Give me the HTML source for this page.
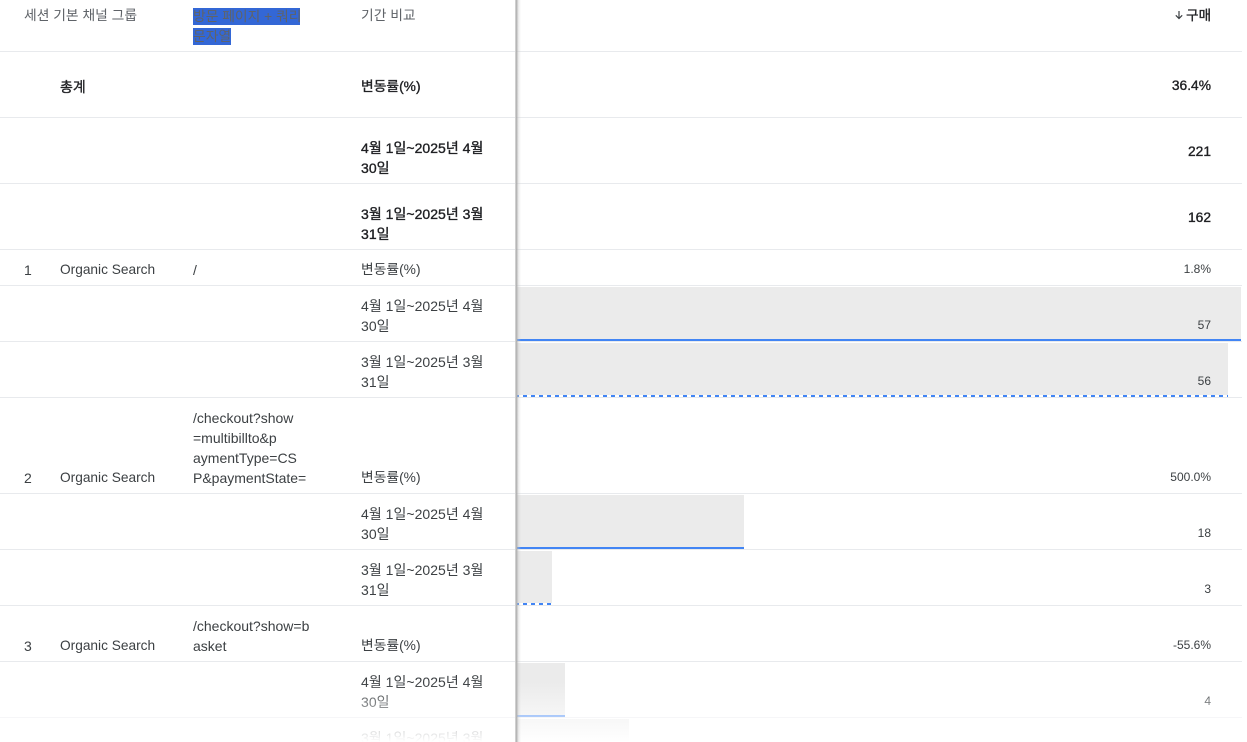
<!DOCTYPE html>
<html lang="ko"><head><meta charset="utf-8"><title>표</title>
<style>
html,body{margin:0;padding:0;background:#fff;width:1247px;height:742px;overflow:hidden}
body{position:relative;font-family:"Liberation Sans","Noto Sans CJK KR",sans-serif;font-size:14px;line-height:20px;color:#3c4043}
.t{position:absolute;white-space:nowrap}
.k{font-size:14px;letter-spacing:.03px}
.p{font-size:13.8px}
.o{font-size:13.7px}
.h{color:#5f6368;font-size:13.8px}
.b{color:#202124;-webkit-text-stroke:.35px #202124}
.n{position:absolute;right:36px;font-size:12px;line-height:20px;white-space:nowrap;color:#3c4043}
.nb{position:absolute;right:36px;font-size:13.8px;line-height:20px;color:#202124;-webkit-text-stroke:.35px #202124;white-space:nowrap}
.l{position:absolute;left:0;width:1242px;height:1px;background:#e8eaed}
.g{position:absolute;left:517px;background:#ebebeb}
.s{position:absolute;left:517px;height:2px;background:#4285f4}
.d{position:absolute;left:517px;height:2px;background:repeating-linear-gradient(90deg,#4285f4 0 2px,#fff 2px 6px,#4285f4 6px 8px)}
.sel{background:#3367d6;position:absolute;height:17px}
</style></head><body>
<div class="g" style="top:287px;width:724px;height:52px"></div>
<div class="s" style="top:339px;width:724px"></div>
<div class="g" style="top:343px;width:711px;height:52px"></div>
<div class="d" style="top:395px;width:711px"></div>
<div class="g" style="top:495px;width:227px;height:52px"></div>
<div class="s" style="top:547px;width:227px"></div>
<div class="g" style="top:551px;width:35px;height:52px"></div>
<div class="d" style="top:603px;width:35px"></div>
<div class="g" style="top:663px;width:48px;height:52px"></div>
<div class="s" style="top:715px;width:48px"></div>
<div class="g" style="top:719px;width:112px;height:23px"></div>

<div class="l" style="top:51px"></div><div class="l" style="top:117px"></div><div class="l" style="top:183px"></div><div class="l" style="top:249px"></div><div class="l" style="top:285px"></div><div class="l" style="top:341px"></div><div class="l" style="top:397px"></div><div class="l" style="top:493px"></div><div class="l" style="top:549px"></div><div class="l" style="top:605px"></div><div class="l" style="top:661px"></div><div class="l" style="top:717px"></div>

<div class="sel" style="left:193px;top:8px;width:107px"></div>
<div class="sel" style="left:193px;top:28px;width:38px"></div>
<div class="t h" style="left:24px;top:6px">세션 기본 채널 그룹</div>
<div class="t h" style="left:193px;top:7px">방문 페이지 + 쿼리</div>
<div class="t h" style="left:193px;top:27px">문자열</div>
<div class="t h" style="left:361px;top:6px">기간 비교</div>

<div class="t b k" style="left:60px;top:77px">총계</div>
<div class="t b p" style="left:361px;top:77px">변동률(%)</div>
<div class="t b k" style="left:361px;top:138px">4월 1일~2025년 4월<br>30일</div>
<div class="t b k" style="left:361px;top:204px">3월 1일~2025년 3월<br>31일</div>

<div class="t" style="left:24px;top:260px">1</div>
<div class="t o" style="left:60px;top:260px">Organic Search</div>
<div class="t" style="left:193px;top:260px">/</div>
<div class="t p" style="left:361px;top:260px">변동률(%)</div>
<div class="t k" style="left:361px;top:296px">4월 1일~2025년 4월<br>30일</div>
<div class="t k" style="left:361px;top:352px">3월 1일~2025년 3월<br>31일</div>

<div class="t" style="left:24px;top:468px">2</div>
<div class="t o" style="left:60px;top:468px">Organic Search</div>
<div class="t" style="left:193px;top:408px">/checkout?show<br>=multibillto&amp;p<br>aymentType=CS<br>P&amp;paymentState=</div>
<div class="t p" style="left:361px;top:468px">변동률(%)</div>
<div class="t k" style="left:361px;top:504px">4월 1일~2025년 4월<br>30일</div>
<div class="t k" style="left:361px;top:560px">3월 1일~2025년 3월<br>31일</div>

<div class="t" style="left:24px;top:636px">3</div>
<div class="t o" style="left:60px;top:636px">Organic Search</div>
<div class="t" style="left:193px;top:616px">/checkout?show=b<br>asket</div>
<div class="t p" style="left:361px;top:636px">변동률(%)</div>
<div class="t k" style="left:361px;top:672px">4월 1일~2025년 4월<br>30일</div>
<div class="t k" style="left:361px;top:728px">3월 1일~2025년 3월</div>

<svg style="position:absolute;left:1174px;top:10px" width="10" height="10" viewBox="0 0 10 10"><path d="M5 1v7.5M1.8 5.3l3.2 3.2 3.2-3.2" fill="none" stroke="#3c4043" stroke-width="1.2"/></svg>
<div class="t b" style="right:36px;top:6px;font-size:13.5px">구매</div>
<div class="nb" style="top:76px">36.4%</div>
<div class="nb" style="top:142px">221</div>
<div class="nb" style="top:208px">162</div>
<div class="n" style="top:259px">1.8%</div>
<div class="n" style="top:315px">57</div>
<div class="n" style="top:371px">56</div>
<div class="n" style="top:467px">500.0%</div>
<div class="n" style="top:523px">18</div>
<div class="n" style="top:579px">3</div>
<div class="n" style="top:635px">-55.6%</div>
<div class="n" style="top:691px">4</div>

<div style="position:absolute;left:0;top:682px;width:1247px;height:60px;background:linear-gradient(rgba(255,255,255,0),#fff)"></div>
<div style="position:absolute;left:515px;top:0;width:1px;height:742px;background:#cfcfcf"></div>
<div style="position:absolute;left:516px;top:0;width:5px;height:742px;background:linear-gradient(90deg,#a8a8a8,rgba(200,200,200,.35) 50%,rgba(255,255,255,0))"></div>
</body></html>
